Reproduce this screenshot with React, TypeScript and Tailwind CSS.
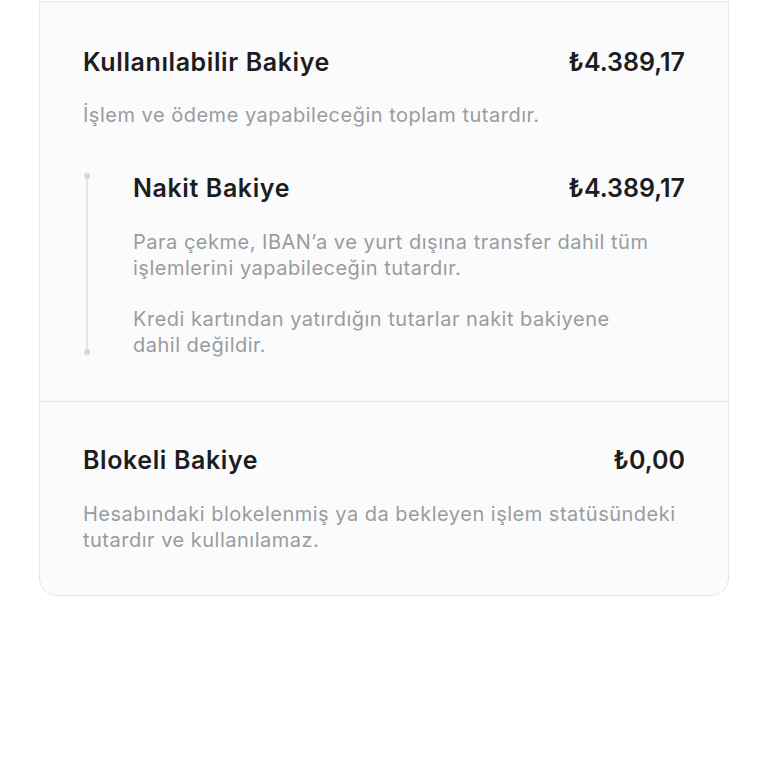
export default function App() {
  const font = { fontFamily: "Inter, 'Noto Sans', sans-serif" };
  const h = "text-[25px] font-semibold text-[#1d1d1f] tracking-[0.6px]";
  const amt = "text-[25px] font-semibold text-[#1d1d1f] tracking-[0px]";
  const d = "text-[20px] leading-[26px] text-[#999ba0] tracking-[0.5px]";
  return (
    <div className="w-[768px] h-[768px] bg-white" style={font}>
      <div className="pt-px px-[39px]">
        <div className="border border-[#e6e6e8] rounded-b-[18px] bg-[#fbfbfc]">
          <div className="px-[43px] pt-[45px] pb-[43px]">
            <div className="flex justify-between items-center h-8">
              <span className={h}>Kullanılabilir Bakiye</span>
              <span className={amt}>₺4.389,17</span>
            </div>
            <p className={`mt-[23px] ${d}`}>İşlem ve ödeme yapabileceğin toplam tutardır.</p>
            <div className="mt-[45px] relative pl-[50px]">
              <div className="absolute left-[3px] top-[2px] bottom-[5px] w-[2px] bg-[#e5e6e8]" />
              <div className="absolute left-[1px] top-0 w-[6px] h-[6px] rounded-full bg-[#d6d7da]" />
              <div className="absolute left-[1px] bottom-[3px] w-[6px] h-[6px] rounded-full bg-[#d6d7da]" />
              <div className="flex justify-between items-center h-8">
                <span className={h}>Nakit Bakiye</span>
                <span className={amt}>₺4.389,17</span>
              </div>
              <p className={`mt-[24px] max-w-[522px] ${d}`}>Para çekme, IBAN’a ve yurt dışına transfer dahil tüm işlemlerini yapabileceğin tutardır.</p>
              <p className={`mt-[25px] max-w-[522px] ${d}`}>Kredi kartından yatırdığın tutarlar nakit bakiyene dahil değildir.</p>
            </div>
          </div>
          <div className="border-t border-[#e6e6e8] px-[43px] pt-[43px] pb-[42px]">
            <div className="flex justify-between items-center h-8">
              <span className={h}>Blokeli Bakiye</span>
              <span className={amt}>₺0,00</span>
            </div>
            <p className={`mt-[24px] ${d}`}>Hesabındaki blokelenmiş ya da bekleyen işlem statüsündeki tutardır ve kullanılamaz.</p>
          </div>
        </div>
      </div>
    </div>
  );
}
